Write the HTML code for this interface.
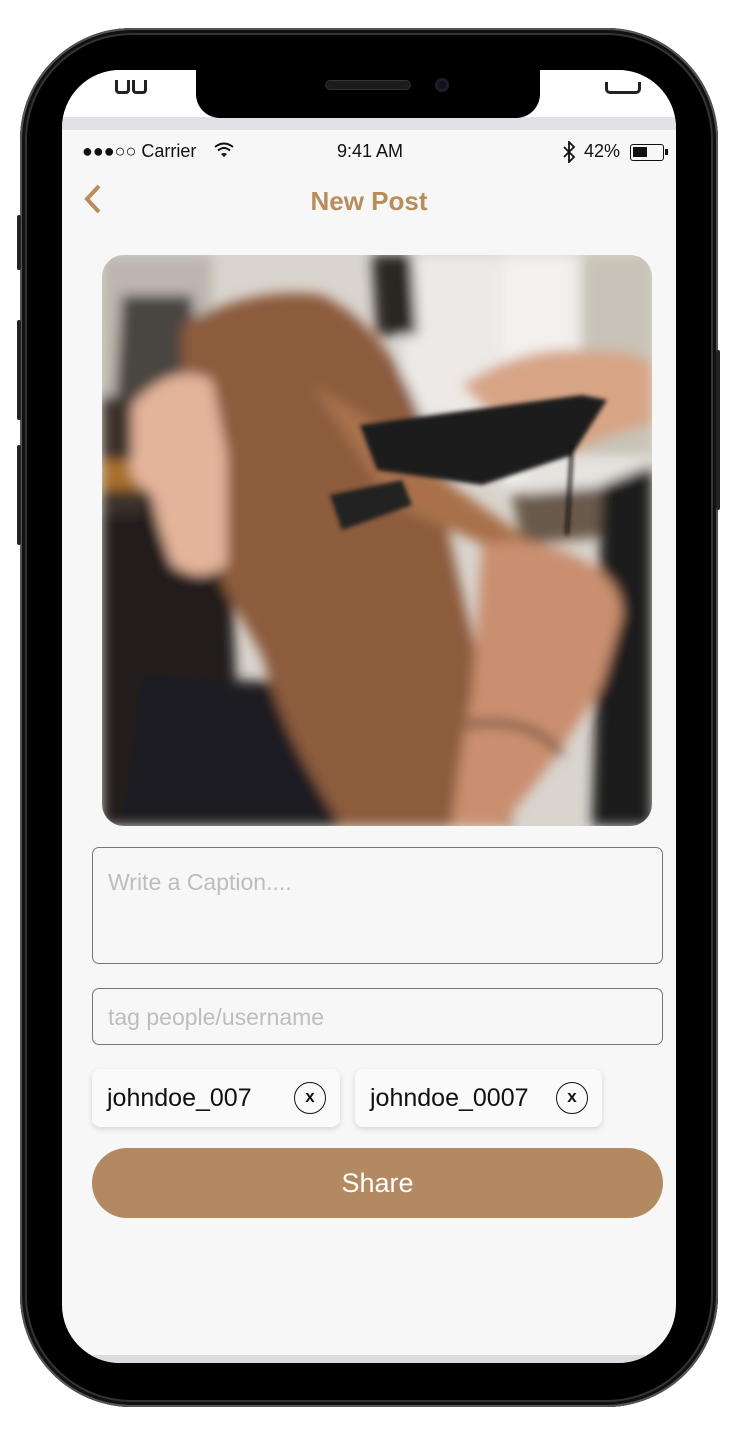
<!DOCTYPE html>
<html><head><meta charset="utf-8"><style>
*{margin:0;padding:0;box-sizing:border-box}
body{width:736px;height:1440px;background:#fff;position:relative;overflow:hidden;font-family:"Liberation Sans",Arial,sans-serif}
.body{position:absolute;left:20px;top:28px;width:698px;height:1379px;border-radius:112px;background:#000;box-shadow:inset 0 0 0 2px #555,inset 0 0 0 5px #111,inset 0 0 0 7px #333}
.btn{position:absolute;background:#222;width:4px;border-radius:2px}
.screen{position:absolute;left:62px;top:70px;width:614px;height:1293px;border-radius:58px;background:#f7f7f7;overflow:hidden}
.topw{position:absolute;left:0;top:0;width:614px;height:47px;background:#fff}
.band{position:absolute;left:0;top:47px;width:614px;height:13px;background:#e1e0e5}
.bband{position:absolute;left:0;top:1285px;width:614px;height:8px;background:#dcdbe0}
.notch{position:absolute;left:134px;top:0;width:344px;height:48px;background:#000;border-radius:0 0 24px 24px}
.spk{position:absolute;left:129px;top:10px;width:86px;height:10px;border-radius:6px;background:#1b1b1b;border:1px solid #333}
.cam{position:absolute;left:239px;top:8px;width:14px;height:14px;border-radius:50%;background:#111;box-shadow:inset 0 0 0 3px #1c1c2a}
.status{position:absolute;top:71px;font-size:18px;color:#111}
.title{position:absolute;left:0;width:614px;top:116px;text-align:center;font-size:26px;font-weight:bold;color:#b98c5c}
.photo{position:absolute;left:40px;top:185px;width:550px;height:571px;border-radius:22px;overflow:hidden}
.box{position:absolute;left:30px;width:571px;border:1.5px solid #777;border-radius:7px;font-size:23px;color:#bdbdbd}
.chip{position:absolute;top:999px;height:58px;background:#fafafa;border-radius:8px;box-shadow:0 2px 6px rgba(0,0,0,.15);font-size:25px;color:#111;line-height:58px;padding-left:15px}
.x{position:absolute;top:13px;width:32px;height:32px;border:1.5px solid #111;border-radius:50%;font-size:17px;font-weight:bold;line-height:28px;text-align:center}
.share{position:absolute;left:30px;top:1078px;width:571px;height:70px;border-radius:35px;background:#b28961;color:#fff;font-size:27px;text-align:center;line-height:70px}
</style></head><body>
<div class="body"></div>
<div class="btn" style="left:17px;top:215px;height:55px"></div>
<div class="btn" style="left:17px;top:320px;height:100px"></div>
<div class="btn" style="left:17px;top:445px;height:100px"></div>
<div class="btn" style="left:716px;top:350px;height:160px"></div>
<div class="screen">
 <div class="topw"></div>
 <div class="band"></div>
 <div class="notch"><div class="spk"></div><div class="cam"></div></div>
 <div style="position:absolute;left:53px;top:10px;width:15px;height:14px;border:3px solid #222;border-top:none;border-radius:0 0 4px 4px"></div>
 <div style="position:absolute;left:70px;top:10px;width:15px;height:14px;border:3px solid #222;border-top:none;border-radius:0 0 4px 4px"></div>
 <div style="position:absolute;left:543px;top:12px;width:36px;height:12px;border:3px solid #222;border-top:none;border-radius:0 0 5px 5px"></div>
 <div class="status" style="left:20px">●●●○○ Carrier</div>
 <svg style="position:absolute;left:152px;top:72px" width="20" height="16" viewBox="0 0 20 16"><path d="M1 5 Q10 -2 19 5" fill="none" stroke="#111" stroke-width="2"/><path d="M4 8.5 Q10 3.5 16 8.5" fill="none" stroke="#111" stroke-width="2"/><path d="M7 12 L10 15 L13 12 Q10 10 7 12Z" fill="#111"/></svg>
 <div class="status" style="left:275px">9:41 AM</div>
 <svg style="position:absolute;left:500px;top:71px" width="14" height="22" viewBox="0 0 14 22"><path d="M2 6 L12 16 L7 21 L7 1 L12 6 L2 16" fill="none" stroke="#111" stroke-width="1.8"/></svg>
 <div class="status" style="left:522px">42%</div>
 <div style="position:absolute;left:568px;top:74px;width:34px;height:17px;border:1.5px solid #111;border-radius:3px"><div style="position:absolute;left:2px;top:2px;width:14px;height:10px;background:#111"></div></div>
 <div style="position:absolute;left:603px;top:79px;width:3px;height:6px;background:#111"></div>
 <svg style="position:absolute;left:20px;top:113px" width="22" height="32"><path d="M17 3 L5 16 L17 29" fill="none" stroke="#b98c5c" stroke-width="4"/></svg>
 <div class="title">New Post</div>
 <div class="photo">
 <svg width="550" height="571" viewBox="0 0 550 571">
 <defs><filter id="b"><feGaussianBlur stdDeviation="6"/></filter><filter id="b2"><feGaussianBlur stdDeviation="2"/></filter></defs>
 <rect width="550" height="571" fill="#d9d4ce"/>
 <g filter="url(#b)">
 <rect x="300" y="0" width="250" height="160" fill="#ece9e6"/>
 <rect x="400" y="0" width="70" height="230" fill="#f3f1ee"/>
 <rect x="480" y="0" width="70" height="230" fill="#c7c3b8"/>
 <rect x="0" y="0" width="110" height="190" fill="#bdb6ae"/>
 <path d="M20 40 L90 40 L100 200 L10 200Z" fill="#4a4440"/>
 <path d="M270 0 L310 0 L315 80 L275 80Z" fill="#2a2624"/>
 <path d="M0 200 L100 180 L130 330 L140 571 L0 571Z" fill="#241f1d"/>
 <path d="M0 140 L60 150 L40 260 L0 260Z" fill="#3a322c"/>
 <rect x="0" y="205" width="40" height="30" fill="#a86f2c"/>
 <path d="M420 200 L550 200 L550 260 L430 270Z" fill="#e6e2dd"/>
 <path d="M410 240 L520 230 L520 280 L420 290Z" fill="#6a5a4c"/>
 <path d="M500 230 L550 210 L550 571 L490 571Z" fill="#1c1a1b"/>
 <path d="M40 420 L230 430 L380 571 L20 571Z" fill="#1e1d20"/>
 <path d="M80 70 Q150 30 220 40 Q300 80 330 200 Q350 300 380 420 L410 571 L240 571 Q180 480 160 400 L120 330 Q110 230 80 150Z" fill="#8c5c3e"/>
 <path d="M210 130 Q300 180 350 230 Q420 280 450 300 L430 310 Q360 280 290 250Z" fill="#a8714c"/>
 <path d="M30 150 Q70 105 110 125 L125 200 L125 310 Q100 330 70 310 Q55 270 50 240 Q20 220 30 200Z" fill="#e3b39a"/>
 <path d="M360 130 Q420 90 480 95 Q540 95 550 110 L550 170 Q500 180 470 200 Q430 190 390 160Z" fill="#d7a486"/>
 <path d="M380 290 Q430 280 470 300 Q520 320 520 360 L500 430 Q470 480 440 520 L400 571 L350 571 Q360 480 370 440Z" fill="#c98f70"/>
 <path d="M365 470 Q430 460 460 500" stroke="#111" stroke-width="5" fill="none"/>
 </g>
 <g filter="url(#b2)">
 <path d="M258 170 L480 140 L505 145 L470 200 L380 230 L275 215Z" fill="#1d1c1d"/>
 <path d="M228 240 L300 225 L310 250 L240 275Z" fill="#232223"/>
 <path d="M470 190 L465 280" stroke="#111" stroke-width="3"/>
 </g>
 </svg>
 </div>
 <div class="box" style="top:777px;height:117px"><span style="position:absolute;left:15px;top:21px">Write a Caption....</span></div>
 <div class="box" style="top:918px;height:57px"><span style="position:absolute;left:15px;top:15px">tag people/username</span></div>
 <div class="chip" style="left:30px;width:248px">johndoe_007<div class="x" style="left:202px">x</div></div>
 <div class="chip" style="left:293px;width:247px">johndoe_0007<div class="x" style="left:201px">x</div></div>
 <div class="share">Share</div>
 <div class="bband"></div>
</div>
</body></html>
